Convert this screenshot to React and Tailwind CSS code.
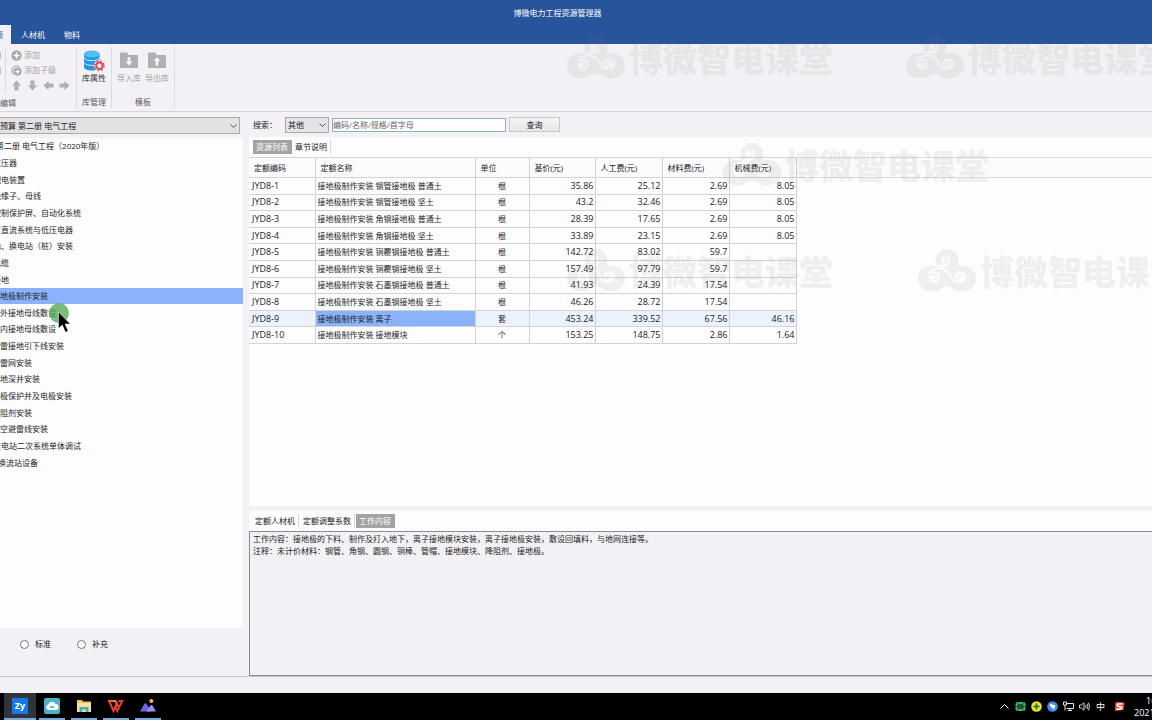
import { useId, useState } from "react";

const MENU_TABS = ["人材机", "物料"];

const CHAPTERS = [
  { text: "第二册 电气工程（2020年版）", level: 0 },
  { text: "变压器", level: 1 },
  { text: "配电装置", level: 1 },
  { text: "绝缘子、母线", level: 1 },
  { text: "控制保护屏、自动化系统", level: 1 },
  { text: "交直流系统与低压电器", level: 1 },
  { text: "站、换电站（桩）安装", level: 1 },
  { text: "电缆", level: 1 },
  { text: "接地", level: 1 },
  { text: "地极制作安装", level: 2 },
  { text: "外接地母线敷设", level: 2 },
  { text: "内接地母线敷设", level: 2 },
  { text: "雷接地引下线安装", level: 2 },
  { text: "雷网安装", level: 2 },
  { text: "地深井安装", level: 2 },
  { text: "极保护井及电极安装", level: 2 },
  { text: "阻剂安装", level: 2 },
  { text: "空避雷线安装", level: 2 },
  { text: "变电站二次系统单体调试", level: 1 },
  { text: "换流站设备", level: 3 },
];

// The tree is scrolled sideways, so shallow levels start left of the panel
const LEVEL_INDENT = ["-ml-1", "-ml-[7px]", "ml-0", "-ml-0.5"];

const COLUMNS = [
  { label: "定额编码", width: "w-[66px]" },
  { label: "定额名称", width: "w-[160px]" },
  { label: "单位", width: "w-[54px]" },
  { label: "基价(元)", width: "w-[66px]" },
  { label: "人工费(元)", width: "w-[67px]" },
  { label: "材料费(元)", width: "w-[67px]" },
  { label: "机械费(元)", width: "w-[67px]" },
];

const ROWS = [
  ["JYD8-1", "接地极制作安装 钢管接地极 普通土", "根", "35.86", "25.12", "2.69", "8.05"],
  ["JYD8-2", "接地极制作安装 钢管接地极 坚土", "根", "43.2", "32.46", "2.69", "8.05"],
  ["JYD8-3", "接地极制作安装 角钢接地极 普通土", "根", "28.39", "17.65", "2.69", "8.05"],
  ["JYD8-4", "接地极制作安装 角钢接地极 坚土", "根", "33.89", "23.15", "2.69", "8.05"],
  ["JYD8-5", "接地极制作安装 铜覆钢接地极 普通土", "根", "142.72", "83.02", "59.7", ""],
  ["JYD8-6", "接地极制作安装 铜覆钢接地极 坚土", "根", "157.49", "97.79", "59.7", ""],
  ["JYD8-7", "接地极制作安装 石墨钢接地极 普通土", "根", "41.93", "24.39", "17.54", ""],
  ["JYD8-8", "接地极制作安装 石墨钢接地极 坚土", "根", "46.26", "28.72", "17.54", ""],
  ["JYD8-9", "接地极制作安装 离子", "套", "453.24", "339.52", "67.56", "46.16"],
  ["JYD8-10", "接地极制作安装 接地模块", "个", "153.25", "148.75", "2.86", "1.64"],
];

const WORK_CONTENT =
  "工作内容：接地极的下料、制作及打入地下，离子接地模块安装，离子接地极安装，敷设回填料，与地网连接等。\n注释：未计价材料：钢管、角钢、圆钢、铜棒、管帽、接地模块、降阻剂、接地极。";

function Arrow({ turn }) {
  return (
    <svg className="size-[11px]" viewBox="0 0 12 12" fill="#b0afb2">
      <path transform={`rotate(${turn} 6 6)`} d="M6 0.5 11 6H8.2V11.5H3.8V6H1z" />
    </svg>
  );
}

function AddIcon({ child }) {
  return (
    <svg className="size-[11px]" viewBox="0 0 12 12" fill="none">
      {child ? (
        <>
          <path d="M9.5 2.2A5 5 0 1 0 3 10.2" stroke="#a9a8ab" strokeWidth="1.2" />
          <circle cx="7.2" cy="7.2" r="4.4" fill="#a9a8ab" />
          <path d="M7.2 4.8v4.8M4.8 7.2h4.8" stroke="#fff" strokeWidth="1.5" />
        </>
      ) : (
        <>
          <circle cx="6" cy="6" r="5.6" fill="#a9a8ab" />
          <path d="M6 2.8v6.4M2.8 6h6.4" stroke="#fff" strokeWidth="1.8" />
        </>
      )}
    </svg>
  );
}

function DatabaseIcon() {
  return (
    <svg className="h-[22px] w-[22px]" viewBox="0 0 22 22">
      <path d="M1 4v13c0 2 3.5 3.6 7.8 3.6s7.8-1.6 7.8-3.6V4z" fill="#2196e3" />
      <ellipse cx="8.8" cy="4" rx="7.8" ry="3.4" fill="#4cc0f6" />
      <path
        d="M1 7.2c0 2 3.5 3.4 7.8 3.4s7.8-1.4 7.8-3.4M1 12c0 2 3.5 3.4 7.8 3.4s7.8-1.4 7.8-3.4"
        fill="none"
        stroke="#e7f4fd"
        strokeWidth="1"
      />
      <circle cx="16.4" cy="15.8" r="5.6" fill="#f4f2f6" />
      <circle cx="16.4" cy="15.8" r="3.2" fill="none" stroke="#e5484f" strokeWidth="2" />
      <circle
        cx="16.4"
        cy="15.8"
        r="4.7"
        fill="none"
        stroke="#e5484f"
        strokeWidth="1.5"
        strokeDasharray="1.85 1.84"
      />
    </svg>
  );
}

function FolderIcon({ up }) {
  return (
    <svg className="h-4 w-[18px]" viewBox="0 0 18 16">
      <path d="M0 1.5Q0 .5 1 .5H7L9 3H17Q18 3 18 4V15Q18 16 17 16H1Q0 16 0 15z" fill="#b0afb2" />
      <path
        d={up ? "M9 5 12.5 9H10.3V13.5H7.7V9H5.5z" : "M9 13.5 12.5 9.5H10.3V5H7.7V9.5H5.5z"}
        fill="#f8f7f9"
      />
    </svg>
  );
}

function RibbonGroup({ label, className, children }) {
  return (
    <div className={`flex shrink-0 flex-col border-r border-[#dddbe0] ${className}`}>
      <div className="flex h-[46px] justify-center">{children}</div>
      <span className="pt-1 text-center leading-3 text-[#5c5c5e]">{label}</span>
    </div>
  );
}

function Ribbon() {
  return (
    <div className="h-[68px] shrink-0 overflow-hidden border-b border-[#d8d6da] pt-[3px] pb-[3px]">
      <div className="flex h-full">
        <div className="flex w-[77px] shrink-0 flex-col border-r border-[#dddbe0]">
          <div className="flex h-[46px] pt-px">
            <div className="flex w-1.5 shrink-0 flex-col gap-2 border-r border-[#dddbe0] pt-1">
              <i className="h-[7px] w-px bg-[#c2c1c4]" />
              <i className="h-[7px] w-px bg-[#c2c1c4]" />
            </div>
            <div className="flex flex-col pl-[5px] text-[#a3a2a5]">
              <button className="flex h-[15px] items-center gap-0.5">
                <AddIcon />
                添加
              </button>
              <button className="flex h-[15px] items-center gap-0.5">
                <AddIcon child />
                添加子级
              </button>
              <div className="flex h-4 items-center gap-[5px]">
                <button aria-label="上移"><Arrow turn={0} /></button>
                <button aria-label="下移"><Arrow turn={180} /></button>
                <button aria-label="左移"><Arrow turn={270} /></button>
                <button aria-label="右移"><Arrow turn={90} /></button>
              </div>
            </div>
          </div>
          <span className="pt-1 leading-3 text-[#5c5c5e]">编辑</span>
        </div>
        <RibbonGroup label="库管理" className="w-[35px]">
          <button className="flex flex-col items-center pt-[3px] leading-3 text-[#333]">
            <DatabaseIcon />
            库属性
          </button>
        </RibbonGroup>
        <RibbonGroup label="模板" className="w-[63px]">
          <div className="flex gap-1 pt-[5px] leading-3 text-[#a3a2a5]">
            <button className="flex flex-col items-center gap-1">
              <FolderIcon />
              导入库
            </button>
            <button className="flex flex-col items-center gap-1">
              <FolderIcon up />
              导出库
            </button>
          </div>
        </RibbonGroup>
      </div>
    </div>
  );
}

function Chevron() {
  return (
    <svg
      className="pointer-events-none absolute right-[3px] top-1/2 h-1 w-[7px] -translate-y-1/2"
      viewBox="0 0 7 4"
      fill="none"
      stroke="#555"
    >
      <path d="M.5.5 3.5 3.5 6.5.5" />
    </svg>
  );
}

function ChapterPanel({ selected, onSelect }) {
  return (
    <aside className="flex w-[243px] shrink-0 flex-col">
      <div className="relative mr-[3px] mt-[5px] mb-1 h-[17px]">
        <select
          aria-label="定额库"
          className="h-full w-full appearance-none border border-l-0 border-[#a9a8ab] bg-[#e3e1e4] leading-3"
        >
          <option>预算 第二册 电气工程</option>
        </select>
        <Chevron />
      </div>
      <div className="flex-1 overflow-hidden bg-[#fdfdfd]">
        {/* 20 rows share the height evenly */}
        <ul className="grid h-[333px] auto-rows-fr">
          {CHAPTERS.map((item, i) => (
            <li key={item.text} className={i === selected ? "bg-[#8bb3fb]" : ""}>
              <button
                onClick={() => onSelect(i)}
                className={`block h-full w-full whitespace-nowrap text-left ${LEVEL_INDENT[item.level]}`}
              >
                {item.text}
              </button>
            </li>
          ))}
        </ul>
      </div>
      <div className="flex h-12 items-start gap-[26px] pl-5 pt-2.5">
        {["标准", "补充"].map((label) => (
          <label key={label} className="flex items-center gap-1.5 leading-3">
            <input
              type="radio"
              name="source"
              className="size-[9px] appearance-none rounded-full border border-[#77767a] bg-white checked:bg-[#555]"
            />
            {label}
          </label>
        ))}
      </div>
    </aside>
  );
}

function SearchBar() {
  return (
    <form className="flex h-[25px] shrink-0 items-center pl-1" onSubmit={(e) => e.preventDefault()}>
      <label htmlFor="field" className="w-8">搜索：</label>
      <div className="relative h-4 w-11">
        <select
          id="field"
          className="h-full w-full appearance-none border border-[#a9a8ab] bg-[#e5e3e6] pl-0.5 leading-3"
        >
          <option>其他</option>
        </select>
        <Chevron />
      </div>
      <input
        type="text"
        aria-label="关键字"
        placeholder="编码/名称/规格/首字母"
        className="ml-[3px] h-3.5 w-[174px] border border-[#8fb0cb] bg-white placeholder:text-[#666]"
      />
      <button className="ml-[3px] h-[15px] w-[51px] border border-[#c9c8cb] bg-gradient-to-b from-[#f5f4f6] to-[#e6e5e8]">
        查询
      </button>
    </form>
  );
}

function PriceTable({ selected, onSelect }) {
  return (
    <div className="relative min-h-0 flex-1 overflow-hidden">
      {/* The header band runs on past the last column */}
      <div className="absolute inset-x-0 top-0 h-[21px] border-y border-[#dcdcde] bg-[#fbfafc]" />
      <table className="relative h-[187px] w-[547px] table-fixed border-collapse">
        <thead>
          <tr className="h-5">
            {COLUMNS.map((col) => (
              <th
                key={col.label}
                className={`h-5 border border-l-0 border-[#d3d3d6] p-0 pl-[5px] text-left font-normal ${col.width}`}
              >
                {col.label}
              </th>
            ))}
          </tr>
        </thead>
        <tbody>
          {ROWS.map((row, i) => (
            <tr key={row[0]} onClick={() => onSelect(i)} className={i === selected ? "bg-[#ebf2fe]" : ""}>
              {row.map((cell, c) => (
                <td
                  key={c}
                  className={`whitespace-nowrap border border-l-0 border-[#d3d3d6] p-0 ${
                    c === 0
                      ? "pl-[3px] text-[9px] leading-3"
                      : c === 1
                        ? `pl-0.5 ${i === selected ? "bg-[#8bb3fb]" : ""}`
                        : c === 2
                          ? "text-center"
                          : "pr-px text-right text-[9px] leading-3"
                  }`}
                >
                  {cell}
                </td>
              ))}
            </tr>
          ))}
        </tbody>
      </table>
    </div>
  );
}

function Tab({ active, children }) {
  return (
    <button
      className={`h-3.5 border-r px-[3px] ${
        active ? "border-[#a3a3a3] bg-[#a3a3a3] text-white" : "border-[#d0d8e0]"
      }`}
    >
      {children}
    </button>
  );
}

function Watermark({ className }) {
  const maskId = useId();

  return (
    <div className={`pointer-events-none absolute flex items-center gap-1 text-[#808080] opacity-10 ${className}`}>
      <svg className="h-[43px] w-[58px] shrink-0" viewBox="0 0 58 43">
        <mask id={maskId} maskUnits="userSpaceOnUse" x="0" y="0" width="58" height="43">
          <g fill="#fff">
            <circle cx="29" cy="11.5" r="11.5" />
            <path d="M14 17Q22 17 24 15L38 16Q41 17 44 17A12.5 12.5 0 0 1 47 42Q39 44 34 39Q29 36 24 39Q19 44 11 42A12.5 12.5 0 0 1 14 17z" />
          </g>
          <g fill="#000" stroke="#000" strokeLinecap="round">
            <circle cx="27.5" cy="11.5" r="4.5" stroke="none" />
            <path d="M31 14Q28 17 21 17" fill="none" strokeWidth="2.5" />
            <circle cx="16" cy="28.5" r="5.8" stroke="none" />
            <path d="M11 24Q19 17 27 21Q31 23 33 28Q35 33 40 33" fill="none" strokeWidth="2" />
            <circle cx="42.5" cy="28" r="5.8" stroke="none" />
          </g>
          <path d="M26 8Q31 9 29 13Q27 15 25 13" fill="none" stroke="#fff" strokeWidth="1.5" />
          <path d="M12 27Q15 24 18 27Q19 30 16 31" fill="none" stroke="#fff" strokeWidth="1.5" />
          <path d="M46 27Q43 24 40 27Q39 30 42 31" fill="none" stroke="#fff" strokeWidth="1.5" />
        </mask>
        <rect width="58" height="43" fill="currentColor" mask={`url(#${maskId})`} />
      </svg>
      <span className="whitespace-nowrap pt-1 text-[34px] font-black leading-10">博微智电课堂</span>
    </div>
  );
}

function TaskItem({ label, active, children }) {
  return (
    <button
      aria-label={label}
      className={`flex h-full w-8 flex-col items-center justify-between ${active ? "bg-[#333438]" : ""}`}
    >
      <span className="flex flex-1 items-center">{children}</span>
      <span className={`h-0.5 bg-[#76a9dc] ${active ? "w-full" : "w-[26px]"}`} />
    </button>
  );
}

function Taskbar() {
  return (
    <footer className="flex h-[27px] shrink-0 items-center overflow-hidden bg-black text-white">
      <div className="flex h-full pl-1">
        <TaskItem label="Zy" active>
          <span className="flex size-4 items-center justify-center bg-[#1677e8] text-[9px] font-bold leading-4">Zy</span>
        </TaskItem>
        <TaskItem label="云盘">
          <svg className="size-4" viewBox="0 0 16 16">
            <rect width="16" height="16" rx="2" fill="#4eafc8" />
            <path d="M4.6 12a2.8 2.8 0 0 1-.4-5.5A4 4 0 0 1 11.6 6a3 3 0 0 1 0 6z" fill="#fff" />
            <path d="M5.5 9.2q2.5-2.6 5 0q-2.5 1.8-5 0" fill="#4eafc8" />
          </svg>
        </TaskItem>
        <TaskItem label="文件资源管理器">
          <svg className="size-4" viewBox="0 0 16 16">
            <path d="M1 2h5l1 1.5h8V14H1z" fill="#f0c65c" />
            <path d="M1 5h14v9H1z" fill="#fbe39a" />
            <path d="M3.5 14V9h9v5h-2.7v-2.4H6.2V14z" fill="#49a9bd" />
          </svg>
        </TaskItem>
        <TaskItem label="WPS">
          <svg className="size-4" viewBox="0 0 16 16" fill="none" strokeWidth="2">
            <path d="M0 3H7.5L10 8.5" stroke="#f4713f" />
            <path d="M1.2 3 5.5 13 9.5 4" stroke="#e8412b" />
            <path d="M7 8 9.3 13 14.3 3H10.5" stroke="#e8412b" />
          </svg>
        </TaskItem>
        <TaskItem label="图片">
          <svg className="size-4" viewBox="0 0 16 16">
            <path d="M0 13.5 4 6.5Q5.5 4 7 6.5L11 13.5z" fill="#6d63e8" />
            <path d="M6.5 13.5 10 8Q11.5 6 12.8 8L16 13.5z" fill="#9a8cf5" />
            <circle cx="11.3" cy="3" r="2" fill="#f5b63b" />
          </svg>
        </TaskItem>
      </div>
      <div className="ml-auto flex shrink-0 items-center gap-[5px]">
        <svg className="h-[11px] w-[11px]" viewBox="0 0 11 11" fill="none" stroke="#fff">
          <path d="M1.5 7.5 5.5 3.5 9.5 7.5" />
        </svg>
        <svg className="size-[11px]" viewBox="0 0 11 11">
          <rect x=".5" y="1" width="10" height="9" rx="2" fill="#30c45a" />
          <circle cx="5.5" cy="5.5" r="2.6" fill="#103a2a" />
          <path d="M0 5.5h11M3 1v9M8 1v9" stroke="#103a2a" strokeWidth=".7" />
          <circle cx="5.5" cy="5.5" r="1.1" fill="#b04bb8" />
        </svg>
        <svg className="size-[11px]" viewBox="0 0 11 11">
          <circle cx="5.5" cy="5.5" r="5.3" fill="#e8e331" />
          <path d="M5.5 2.5v6M2.5 5.5h6" stroke="#27702c" strokeWidth="1.7" />
        </svg>
        <svg className="size-[11px]" viewBox="0 0 11 11">
          <circle cx="5.5" cy="5.5" r="5.3" fill="#3f8fe6" />
          <path d="M2.5 2.5 8.5 4.5 6.8 8.8 5.3 6.8 3.8 6z" fill="#fff" />
        </svg>
        <svg className="size-[11px]" viewBox="0 0 11 11" fill="none" stroke="#e5e5e5">
          <path d="M4 2.5h6.5v5H3.5M5 9.5h4M7 7.5v2M.5 1h3v3h-3zM2 4v5.5" />
        </svg>
        <svg className="size-[11px]" viewBox="0 0 11 11" fill="none" stroke="#e5e5e5" strokeWidth=".9">
          <path d="M.5 4h1.8L5 1.8v7.4L2.3 7H.5zM6.5 4q1 1.5 0 3M8 2.8q1.9 2.7 0 5.4M9.4 1.6q2.4 3.9 0 7.8" />
        </svg>
        <span className="w-[11px] text-center text-[9px]">中</span>
        <svg className="ml-[3px] size-[11px]" viewBox="0 0 11 11">
          <path d="M1.5 1 10.5 1.5 9.5 9 1 10z" fill="#e8512c" />
          <path d="M8.5 3Q3 2.2 3 4.3C3 5.8 8 5 8 6.8Q8 8.6 2.5 8" fill="none" stroke="#fff" strokeWidth="1.5" />
        </svg>
        {/* The clock is cut by the screen edge */}
        <time className="ml-1 block w-[18px] overflow-hidden whitespace-nowrap text-[9px] leading-3">
          <span className="block pl-3">16</span>
          <span className="block">2021</span>
        </time>
      </div>
    </footer>
  );
}

export default function App() {
  const [chapter, setChapter] = useState(9);
  const [row, setRow] = useState(8);

  return (
    <div className="relative flex h-screen flex-col overflow-hidden bg-[#f3f1f5] font-['Open_Sans','Noto_Sans_CJK_SC',sans-serif] text-[8px] leading-3 text-[#1c1c1e]">
      <header className="h-11 shrink-0 bg-[#27549a] text-white">
        <h1 className="h-[25px] pr-[37px] text-center leading-[25px]">博微电力工程资源管理器</h1>
        <nav className="flex h-[19px] gap-px">
          <button className="flex w-[11px] items-center justify-end overflow-hidden bg-[#f3f1f5] pr-2 text-[#27549a]">
            额
          </button>
          {MENU_TABS.map((tab) => (
            <button key={tab} className="px-[9px]">{tab}</button>
          ))}
        </nav>
      </header>

      <Ribbon />

      <main className="flex min-h-0 flex-1 gap-1.5 border-b border-[#c9c8cb]">
        <ChapterPanel selected={chapter} onSelect={setChapter} />

        <div className="flex min-w-0 flex-1 flex-col">
          <SearchBar />
          <section className="flex min-h-0 flex-1 flex-col bg-[#fdfdfd]">
            <div className="flex h-5 shrink-0 items-center pl-1">
              <Tab active>资源列表</Tab>
              <Tab>章节说明</Tab>
            </div>
            <PriceTable selected={row} onSelect={setRow} />
          </section>
          <section className="mt-[5px] flex h-[165px] shrink-0 flex-col">
            <div className="flex h-5 shrink-0 items-center gap-px bg-[#fdfdfd] pl-[3px]">
              <Tab>定额人材机</Tab>
              <Tab>定额调整系数</Tab>
              <Tab active>工作内容</Tab>
            </div>
            <textarea
              readOnly
              aria-label="工作内容"
              value={WORK_CONTENT}
              className="flex-1 resize-none border border-r-0 border-[#8b8a8e] bg-[#f3f1f5] px-[3px] py-px leading-3 outline-none"
            />
          </section>
        </div>
      </main>

      <div className="h-4 shrink-0" />
      <Taskbar />

      <Watermark className="left-[567px] top-[35px]" />
      <Watermark className="left-[906px] top-[35px]" />
      <Watermark className="left-[723px] top-[142px]" />
      <Watermark className="left-[567px] top-[248px]" />
      <Watermark className="left-[918px] top-[248px]" />

      {/* Pointer with its click highlight */}
      <svg className="pointer-events-none absolute left-12 top-[302px] h-8 w-6" viewBox="0 0 24 32">
        <circle cx="11" cy="11" r="10" fill="#4ba84e" fillOpacity=".75" />
        <path d="M10.5 10V26.5L14.3 23 17.5 30.3 20.2 29 17 22H22.3z" fill="#000" stroke="#fff" strokeWidth=".5" />
      </svg>
    </div>
  );
}
